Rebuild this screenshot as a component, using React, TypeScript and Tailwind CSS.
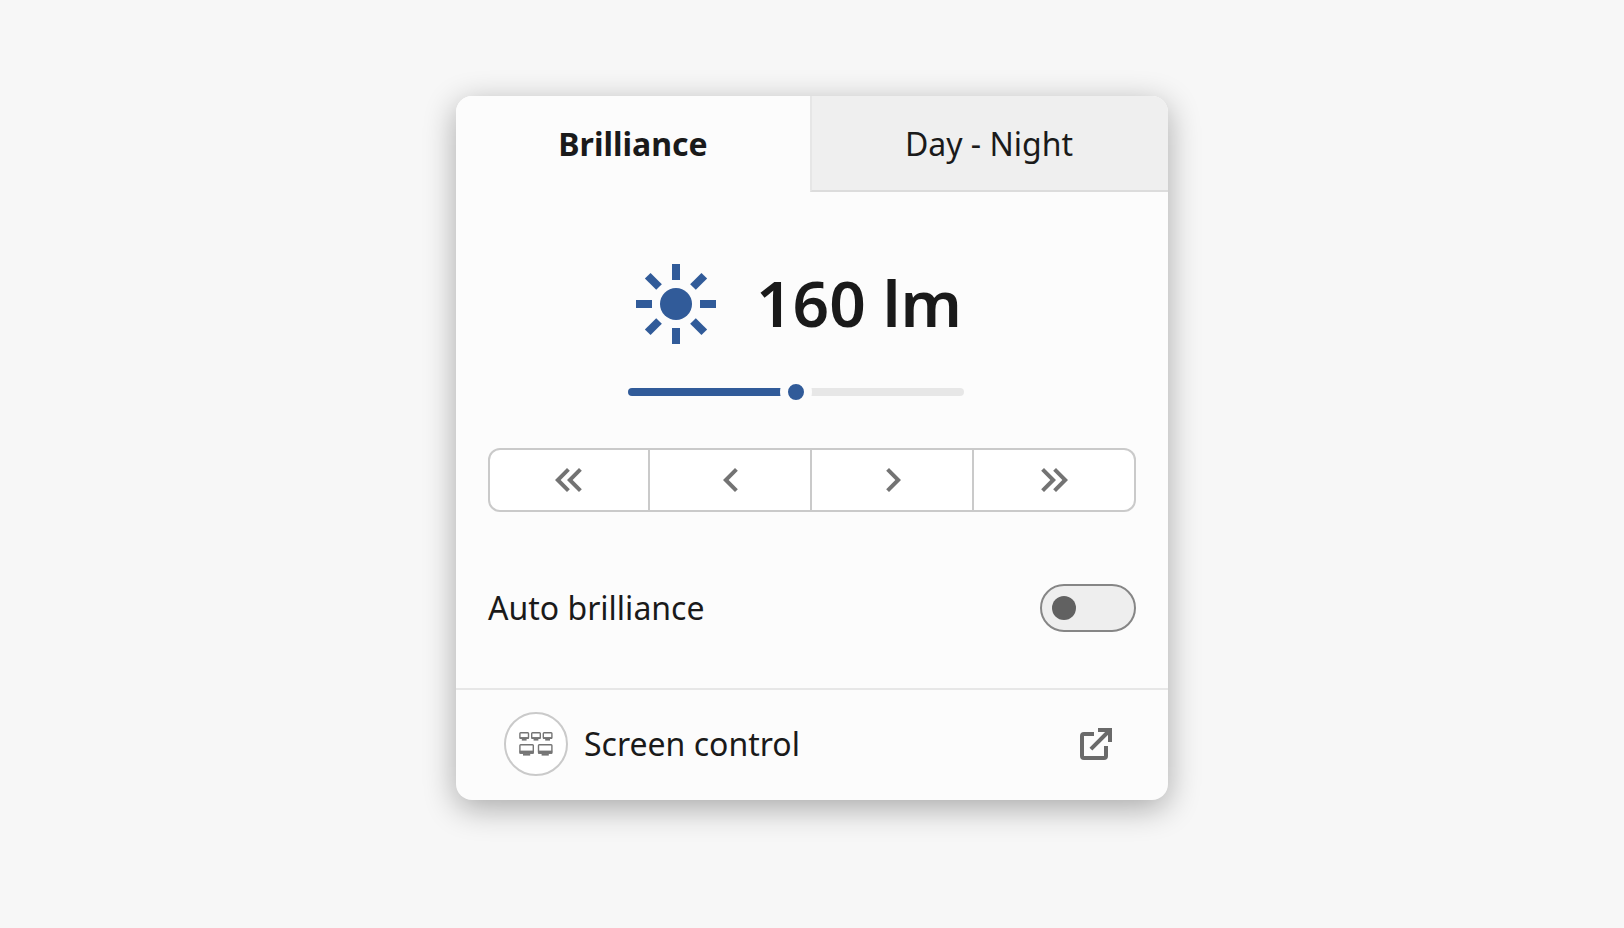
import React, { useState } from 'react';

const MAX_BRILLIANCE = 320;

function SunIcon() {
  const angles = [0, 45, 90, 135, 180, 225, 270, 315];

  return (
    <svg viewBox="0 0 96 96" className="size-24 shrink-0 text-[#315b99]" fill="currentColor" aria-hidden="true">
      <circle cx="48" cy="48" r="16" />
      {angles.map((angle) => (
        <rect key={angle} x="44" y="8" width="8" height="16" transform={`rotate(${angle} 48 48)`} />
      ))}
    </svg>
  );
}

function StepIcon({ d }: { d: string }) {
  return (
    <svg viewBox="0 0 24 24" className="size-12" fill="currentColor" aria-hidden="true">
      <path d={d} />
    </svg>
  );
}

function ScreensIcon() {
  return (
    <svg viewBox="0 0 36 26" className="w-9 text-[#757575]" fill="none" stroke="currentColor" aria-hidden="true">
      {/* Top row of small screens */}
      {[1.2, 13, 24.6].map((x) => (
        <g key={x}>
          <rect x={x + 0.7} y="1.7" width="8.6" height="5.6" rx="0.8" strokeWidth="1.4" />
          <path d={`M${x + 0.6} 7h8.8`} strokeWidth="1.8" />
          <path d={`M${x + 2.6} 8.7h4.8`} strokeWidth="1.8" />
        </g>
      ))}
      {/* Bottom row of large screens */}
      {[1.2, 19.8].map((x) => (
        <g key={x}>
          <rect x={x + 0.7} y="13.7" width="13.4" height="8.4" rx="0.8" strokeWidth="1.4" />
          <path d={`M${x + 0.4} 21.2h14`} strokeWidth="3.2" />
          <path d={`M${x + 3.8} 23.7h7.2`} strokeWidth="1.8" />
        </g>
      ))}
    </svg>
  );
}

function OpenIcon() {
  return (
    <svg viewBox="0 0 48 48" className="size-12 text-[#6a6a6a]" fill="none" stroke="currentColor" strokeWidth="4" aria-hidden="true">
      <path d="M22 14h-10a2 2 0 0 0-2 2v20a2 2 0 0 0 2 2h20a2 2 0 0 0 2-2v-10" />
      <path d="M26 10h12v12" />
      <path d="M38 10L18.9 29.1" />
    </svg>
  );
}

const steps = [
  {
    label: 'Decrease a lot',
    amount: -40,
    d: 'M12.41 7.41L11 6l-6 6 6 6 1.41-1.41L7.83 12zM18.41 7.41L17 6l-6 6 6 6 1.41-1.41L13.83 12z',
  },
  { label: 'Decrease', amount: -10, d: 'M15.41 7.41L14 6l-6 6 6 6 1.41-1.41L10.83 12z' },
  { label: 'Increase', amount: 10, d: 'M10 6L8.59 7.41 13.17 12l-4.58 4.59L10 18l6-6z' },
  {
    label: 'Increase a lot',
    amount: 40,
    d: 'M7 6L5.59 7.41 10.17 12l-4.58 4.59L7 18l6-6zM13 6l-1.41 1.41L16.17 12l-4.58 4.59L13 18l6-6z',
  },
];

export default function App() {
  const [tab, setTab] = useState('brilliance');
  const [brilliance, setBrilliance] = useState(160);
  const [auto, setAuto] = useState(false);

  const percent = (brilliance / MAX_BRILLIANCE) * 100;
  const active = 'bg-[#fcfcfc] font-bold border-b-transparent';
  const inactive = 'bg-[#efefef] border-b-[#dcdcdc]';

  const step = (amount: number) => {
    setBrilliance(Math.min(MAX_BRILLIANCE, Math.max(0, brilliance + amount)));
  };

  return (
    <main className="min-h-screen bg-[#f7f7f7] px-4 py-24 font-['Noto_Sans',sans-serif] text-[32px] leading-[44px] text-[#1a1a1a]">
      <section className="mx-auto w-full max-w-[712px] overflow-hidden rounded-2xl bg-[#fcfcfc] shadow-[0_8px_32px_rgba(0,0,0,0.32)]">
        <div role="tablist" className="flex">
          <button
            role="tab"
            aria-selected={tab === 'brilliance'}
            onClick={() => setTab('brilliance')}
            className={`h-24 flex-1 border-b-2 pt-0.5 ${tab === 'brilliance' ? active : inactive}`}
          >
            Brilliance
          </button>
          <button
            role="tab"
            aria-selected={tab === 'day-night'}
            onClick={() => setTab('day-night')}
            className={`h-24 flex-1 border-b-2 border-l-2 border-l-[#e6e6e6] pt-0.5 pr-0.5 ${tab === 'day-night' ? active : inactive}`}
          >
            Day - Night
          </button>
        </div>

        <div className="px-8 pt-16 pb-14">
          <div className="flex justify-center pr-8">
            <div className="flex w-[336px] flex-col gap-6">
              <div className="flex items-center justify-between">
                <SunIcon />
                <output htmlFor="brilliance" className="pr-0.5 pb-0.5 text-[64px] leading-[94px] font-semibold whitespace-nowrap">
                  {brilliance} lm
                </output>
              </div>
              <input
                id="brilliance"
                type="range"
                aria-label="Brilliance"
                min={0}
                max={MAX_BRILLIANCE}
                value={brilliance}
                onChange={(e) => setBrilliance(Number(e.target.value))}
                style={{ '--fill': `${percent}%` } as React.CSSProperties}
                className="h-8 w-full appearance-none bg-transparent [&::-webkit-slider-runnable-track]:h-2 [&::-webkit-slider-runnable-track]:rounded-full [&::-webkit-slider-runnable-track]:bg-[linear-gradient(to_right,#315b99_var(--fill),#e7e7e7_var(--fill))] [&::-webkit-slider-thumb]:-mt-3 [&::-webkit-slider-thumb]:size-8 [&::-webkit-slider-thumb]:appearance-none [&::-webkit-slider-thumb]:rounded-full [&::-webkit-slider-thumb]:border-8 [&::-webkit-slider-thumb]:border-[#fcfcfc] [&::-webkit-slider-thumb]:bg-[#315b99]"
              />
            </div>
          </div>

          <div role="group" aria-label="Adjust brilliance" className="mt-10 flex">
            {steps.map((s) => (
              <button
                key={s.label}
                aria-label={s.label}
                onClick={() => step(s.amount)}
                className="flex h-16 w-1/4 items-center justify-center border-y-2 border-r-2 border-[#cacaca] bg-white pl-0.5 text-[#737373] first:rounded-l-xl first:border-l-2 first:pl-0 last:rounded-r-xl last:pl-0"
              >
                <StepIcon d={s.d} />
              </button>
            ))}
          </div>

          <div className="mt-[72px] flex h-12 items-center justify-between">
            <label htmlFor="auto">Auto brilliance</label>
            <input
              id="auto"
              type="checkbox"
              role="switch"
              checked={auto}
              onChange={(e) => setAuto(e.target.checked)}
              className="flex h-12 w-24 appearance-none items-center rounded-full border-2 border-[#868686] bg-[#eeeeee] px-2.5 before:size-6 before:rounded-full before:bg-[#616161] checked:justify-end"
            />
          </div>
        </div>

        <a href="#screen-control" className="flex items-center border-t-2 border-[#e7e7e7] px-12 pt-[22px] pb-6">
          <span className="flex size-16 items-center justify-center rounded-full border-2 border-[#cacaca] bg-white">
            <ScreensIcon />
          </span>
          <span className="ml-4 flex-1">Screen control</span>
          <OpenIcon />
        </a>
      </section>
    </main>
  );
}
